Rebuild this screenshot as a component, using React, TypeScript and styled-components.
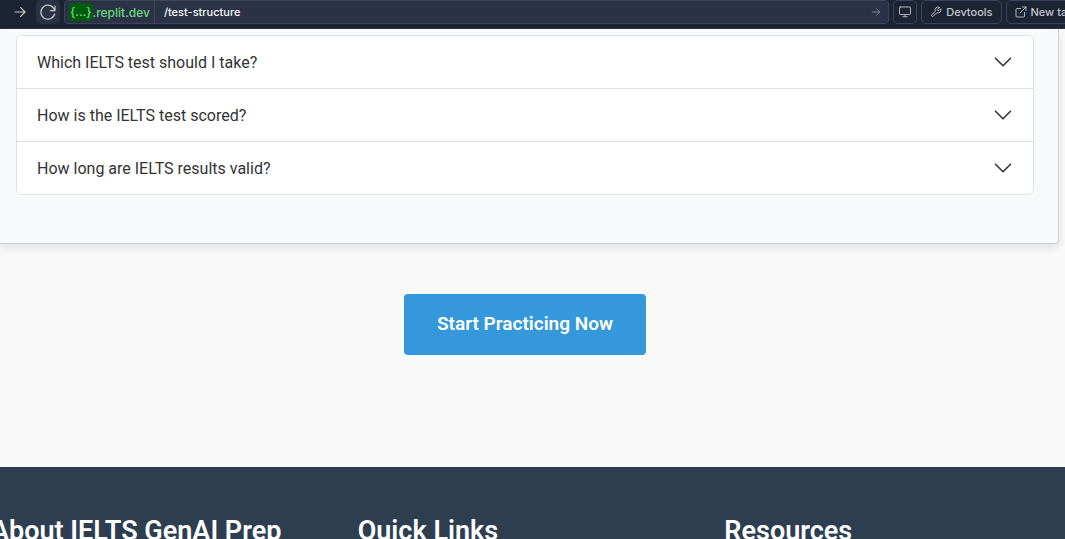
import React from 'react';
import styled, { createGlobalStyle } from 'styled-components';

const GlobalStyle = createGlobalStyle`
  *, *::before, *::after { box-sizing: border-box; }
  html, body { margin: 0; background: #f9f9f9; }
  body { font-family: Roboto, "Liberation Sans", sans-serif; color: #333; }
  button, input { font: inherit; margin: 0; }
`;

const Page = styled.div`
  height: 100vh;
  overflow: hidden;
`;

const Toolbar = styled.header`
  display: flex;
  align-items: flex-start;
  gap: 4px;
  height: 29px;
  margin-right: -18px;
  padding-left: 8px;
  overflow: hidden;
  border-bottom: 1px solid #2b3245;
  background: #1c2333;
  color: #c2c8cc;
  font-family: Inter, "Liberation Sans", sans-serif;
  font-size: 11px;
  font-weight: 500;
`;

const ToolButton = styled.button<{ $look?: 'plain' | 'filled' | 'outline' }>`
  display: flex;
  flex: none;
  align-items: center;
  justify-content: center;
  gap: 4px;
  height: 24px;
  min-width: 24px;
  padding: 0 ${p => (p.$look === 'outline' ? 8 : 0)}px;
  border: 1px solid ${p => (p.$look === 'outline' ? '#3c445c' : 'transparent')};
  border-radius: 5px;
  background: ${p => (p.$look === 'filled' ? '#2b3245' : 'transparent')};
  color: inherit;
  white-space: nowrap;
`;

const IconButton = styled(ToolButton)`
  width: 24px;
  padding: 0;
`;

const AddressBar = styled.form`
  display: flex;
  flex: 1;
  align-items: center;
  min-width: 0;
  height: 24px;
  padding-left: 4px;
  border: 1px solid #3c445c;
  border-radius: 4px;
  background: #2b3245;
`;

const Host = styled.span`
  display: flex;
  align-items: center;
  height: 22px;
  padding-right: 4px;
  border-right: 1px solid #3c445c;
  color: #6cd97e;
  font-size: 12px;
`;

const HostBadge = styled.span`
  height: 18px;
  padding: 0 1px;
  border-radius: 4px;
  background: #005c0c;
  line-height: 18px;
`;

const PathInput = styled.input`
  flex: 1;
  min-width: 0;
  height: 22px;
  padding: 0 9px;
  border: 0;
  outline: 0;
  background: transparent;
  color: #f5f9fc;
`;

const GoButton = styled(ToolButton)`
  height: 22px;
  color: #8b92a3;
`;

const FaqCard = styled.section`
  margin-right: 6px;
  padding: 6px 24px 48px 16px;
  border: 1px solid #cdcfd1;
  border-width: 0 1px 1px 0;
  border-bottom-right-radius: 4px;
  background: #f8f9fb;
  box-shadow: 0 4px 8px rgba(0, 0, 0, 0.1);
`;

const Accordion = styled.div`
  overflow: hidden;
  border: 1px solid #dee2e6;
  border-radius: 6px;
  background: #fff;
`;

const Question = styled.button`
  display: flex;
  align-items: center;
  justify-content: space-between;
  width: 100%;
  height: 52px;
  padding: 0 20px;
  border: 0;
  background: #fff;
  color: #333;
  font-size: 16px;
  line-height: 25px;
  text-align: left;

  & + & {
    height: 53px;
    border-top: 1px solid #dee2e6;
  }
`;

const CallToAction = styled.div`
  display: flex;
  justify-content: center;
  padding: 50px 15px 112px 0;
`;

const StartButton = styled.button`
  padding: 15px 33px 17px;
  border: 0;
  border-radius: 4px;
  background: #3498db;
  color: #fff;
  font-size: 19px;
  font-weight: 600;
  line-height: 29px;
`;

const Footer = styled.footer`
  display: grid;
  grid-template-columns: repeat(3, 1fr);
  margin-right: -35px;
  padding: 47px 0 48px;
  background: #2c3e50;
  color: #fff;
`;

const FooterTitle = styled.h2`
  margin: 0 0 0 -9px;
  font-size: 27px;
  font-weight: 600;
  line-height: 34px;
  white-space: nowrap;
`;

const questions = [
  'Which IELTS test should I take?',
  'How is the IELTS test scored?',
  'How long are IELTS results valid?',
];

const footerTitles = ['About IELTS GenAI Prep', 'Quick Links', 'Resources'];

const Glyph = ({ size = 16, children }: { size?: number; children: React.ReactNode }) => (
  <svg
    width={size}
    height={size}
    viewBox="0 0 24 24"
    fill="none"
    stroke="currentColor"
    strokeWidth="1.8"
    strokeLinecap="round"
    strokeLinejoin="round"
    aria-hidden="true"
  >
    {children}
  </svg>
);

const Arrow = ({ size }: { size?: number }) => (
  <Glyph size={size}><path d="M4.500 12h15M13 5.500l6.500 6.500-6.500 6.500" /></Glyph>
);

const Chevron = () => (
  <svg width="20" height="20" viewBox="0 0 16 16" fill="#333" stroke="#333" strokeWidth="0.2" aria-hidden="true">
    <path
      fillRule="evenodd"
      d="M1.646 4.646a.5.5 0 0 1 .708 0L8 10.293l5.646-5.647a.5.5 0 0 1 .708.708l-6 6a.5.5 0 0 1-.708 0l-6-6a.5.5 0 0 1 0-.708z"
    />
  </svg>
);

export default function App() {
  return (
    <Page>
      <GlobalStyle />
      <Toolbar>
        <IconButton type="button" aria-label="Forward"><Arrow size={16} /></IconButton>
        <IconButton type="button" $look="filled" aria-label="Reload">
          <Glyph size={16}>
            <path d="M22.500 3v7h-7M22 9.500A10.500 10.500 0 1 0 22 15" />
          </Glyph>
        </IconButton>
        <AddressBar onSubmit={e => e.preventDefault()}>
          <Host><HostBadge>{'{...}'}</HostBadge>.replit.dev</Host>
          <PathInput aria-label="Path" defaultValue="/test-structure" />
          <GoButton type="submit" aria-label="Go"><Arrow size={12} /></GoButton>
        </AddressBar>
        <IconButton type="button" $look="outline" aria-label="Screen size">
          <Glyph size={12}>
            <rect x="1" y="2" width="22" height="15" rx="1.5" />
            <path d="M12 17v4M7.500 21.500h9" />
          </Glyph>
        </IconButton>
        <ToolButton type="button" $look="outline">
          <Glyph size={12}>
            <path d="M14.700 6.300a1 1 0 0 0 0 1.400l1.600 1.600a1 1 0 0 0 1.400 0l3.770-3.770a6 6 0 0 1-7.940 7.940l-6.910 6.910a2.120 2.120 0 0 1-3-3l6.910-6.910a6 6 0 0 1 7.940-7.940z" />
          </Glyph>
          Devtools
        </ToolButton>
        <ToolButton type="button" $look="outline">
          <Glyph size={12}>
            <path d="M15 2h7v7M10 14 22 2M19 13v7a2 2 0 0 1-2 2H4a2 2 0 0 1-2-2V7a2 2 0 0 1 2-2h7" />
          </Glyph>
          New tab
        </ToolButton>
      </Toolbar>
      <main>
        <FaqCard>
          <Accordion>
            {questions.map(q => (
              <Question key={q} type="button" aria-expanded="false">
                {q}
                <Chevron />
              </Question>
            ))}
          </Accordion>
        </FaqCard>
        <CallToAction>
          <StartButton type="button">Start Practicing Now</StartButton>
        </CallToAction>
      </main>
      <Footer>
        {footerTitles.map(t => <FooterTitle key={t}>{t}</FooterTitle>)}
      </Footer>
    </Page>
  );
}
